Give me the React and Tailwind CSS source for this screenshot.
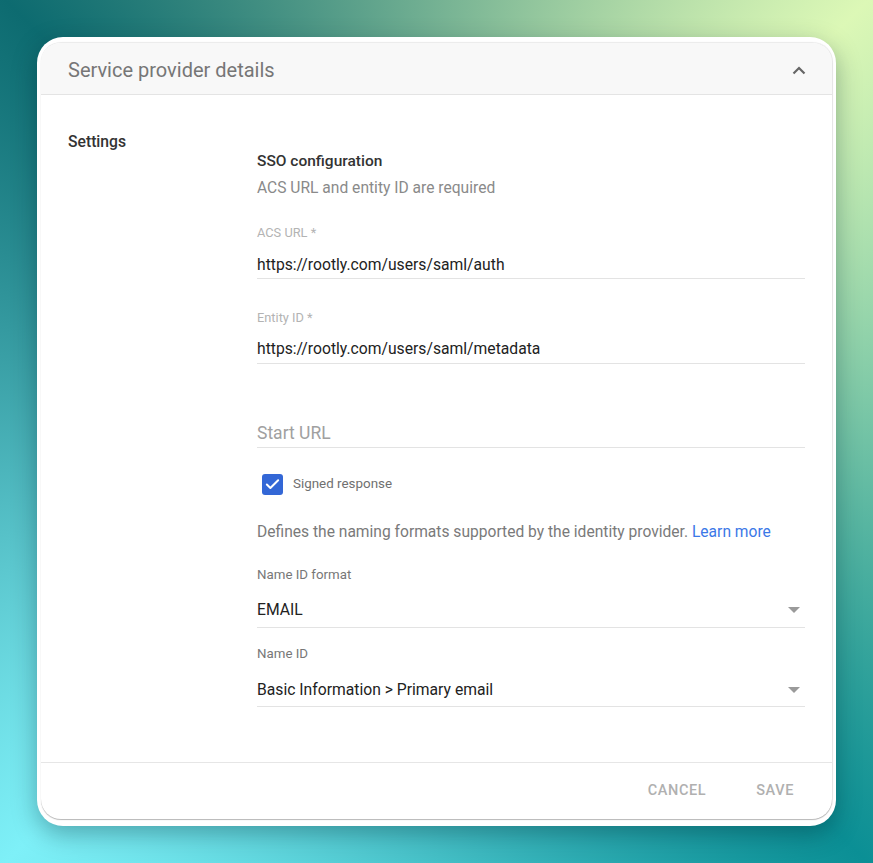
import { Check } from 'lucide-react'

function Field({ label, value, labelGap, bottomPad }) {
  return (
    <div>
      <div className="text-[12.8px] leading-[16px] text-[#b3b3b3]">{label}</div>
      <div className={`${labelGap} ${bottomPad} border-b border-[#e3e3e3] text-[15.7px] leading-[20px] text-[#222]`}>
        {value}
      </div>
    </div>
  )
}

function SelectField({ label, value, labelGap, bottomPad }) {
  return (
    <div>
      <div className="text-[13.3px] leading-[16px] text-[#777]">{label}</div>
      <div className={`${labelGap} ${bottomPad} flex items-center justify-between border-b border-[#e3e3e3] pr-[5px]`}>
        <span className="text-[15.7px] leading-[20px] text-[#222]">{value}</span>
        <svg width="12" height="6" viewBox="0 0 12 6">
          <path d="M0 0 L12 0 L6 6 Z" fill="#9a9a9a" />
        </svg>
      </div>
    </div>
  )
}

export default function App() {
  return (
    <div className="min-h-screen w-full pt-[37px] pl-[37px] font-['Roboto',_'Liberation_Sans',_sans-serif] bg-[conic-gradient(from_45deg_at_50%_50%,#dcf8b6,#0b8f95_90deg,#7ef0f8_180deg,#0d6b70_270deg,#dcf8b6_360deg)]">
      <div className="w-[799px] rounded-[26px] bg-white pt-[5px] px-[4px] pb-[7px] shadow-[0_8px_24px_rgba(0,40,50,0.35)]">
        <div className="overflow-hidden rounded-t-[20px] rounded-b-[20px] border-t border-[#ececec] shadow-[0_1px_1px_rgba(0,0,0,0.28),1px_0_1px_rgba(0,0,0,0.08)]">
          {/* header */}
          <div className="flex h-[52px] items-center justify-between border-b border-[#e4e4e4] bg-[#f8f8f8] pl-[27px] pr-[27px]">
            <span className="pt-[3px] text-[20px] text-[#767676]">Service provider details</span>
            <svg width="14" height="9" viewBox="0 0 14 9" className="mr-[-1px] mt-[3px]">
              <polyline points="1.5,7.5 7,2 12.5,7.5" fill="none" stroke="#666" strokeWidth="2.2" />
            </svg>
          </div>

          {/* body */}
          <div className="flex pt-[37px] pb-[55px] pl-[27px]">
            <div className="w-[189px] text-[15.7px] font-medium leading-[20px] text-[#333]">Settings</div>
            <div className="mt-[19px] w-[548px]">
              <div className="text-[15.5px] font-medium leading-[20px] text-[#333]">SSO configuration</div>
              <div className="mt-[7px] text-[15.6px] leading-[20px] text-[#8a8a8a]">ACS URL and entity ID are required</div>

              <div className="mt-[27px]">
                <Field label="ACS URL *" value="https://rootly.com/users/saml/auth" labelGap="mt-[14px]" bottomPad="pb-[3px]" />
              </div>
              <div className="mt-[31px]">
                <Field label="Entity ID *" value="https://rootly.com/users/saml/metadata" labelGap="mt-[13px]" bottomPad="pb-[4px]" />
              </div>

              <div className="mt-[58px] border-b border-[#e3e3e3] pb-[3px] text-[17.5px] leading-[22px] text-[#a0a0a0]">Start URL</div>

              <div className="mt-[26px] ml-[5px] flex items-center gap-[10px]">
                <div className="flex h-[21px] w-[21px] items-center justify-center rounded-[3px] bg-[#3367d6]">
                  <Check size={17} strokeWidth={2.8} className="text-white" />
                </div>
                <span className="text-[13.4px] text-[#707070]">Signed response</span>
              </div>

              <div className="mt-[27px] text-[15.6px] leading-[20px] text-[#7a7a7a]">
                Defines the naming formats supported by the identity provider.{' '}
                <span className="text-[#3b78e7]">Learn more</span>
              </div>

              <div className="mt-[25px]">
                <SelectField label="Name ID format" value="EMAIL" labelGap="mt-[17px]" bottomPad="pb-[7px]" />
              </div>
              <div className="mt-[18px]">
                <SelectField label="Name ID" value="Basic Information > Primary email" labelGap="mt-[18px]" bottomPad="pb-[6px]" />
              </div>
            </div>
          </div>

          {/* footer */}
          <div className="flex h-[57px] items-center justify-end gap-[50px] border-t border-[#e6e6e6] pr-[38px]">
            <span className="text-[14.5px] font-medium tracking-[0.6px] text-[#b0b0b0]">CANCEL</span>
            <span className="text-[14.5px] font-medium tracking-[0.6px] text-[#b0b0b0]">SAVE</span>
          </div>
        </div>
      </div>
    </div>
  )
}
